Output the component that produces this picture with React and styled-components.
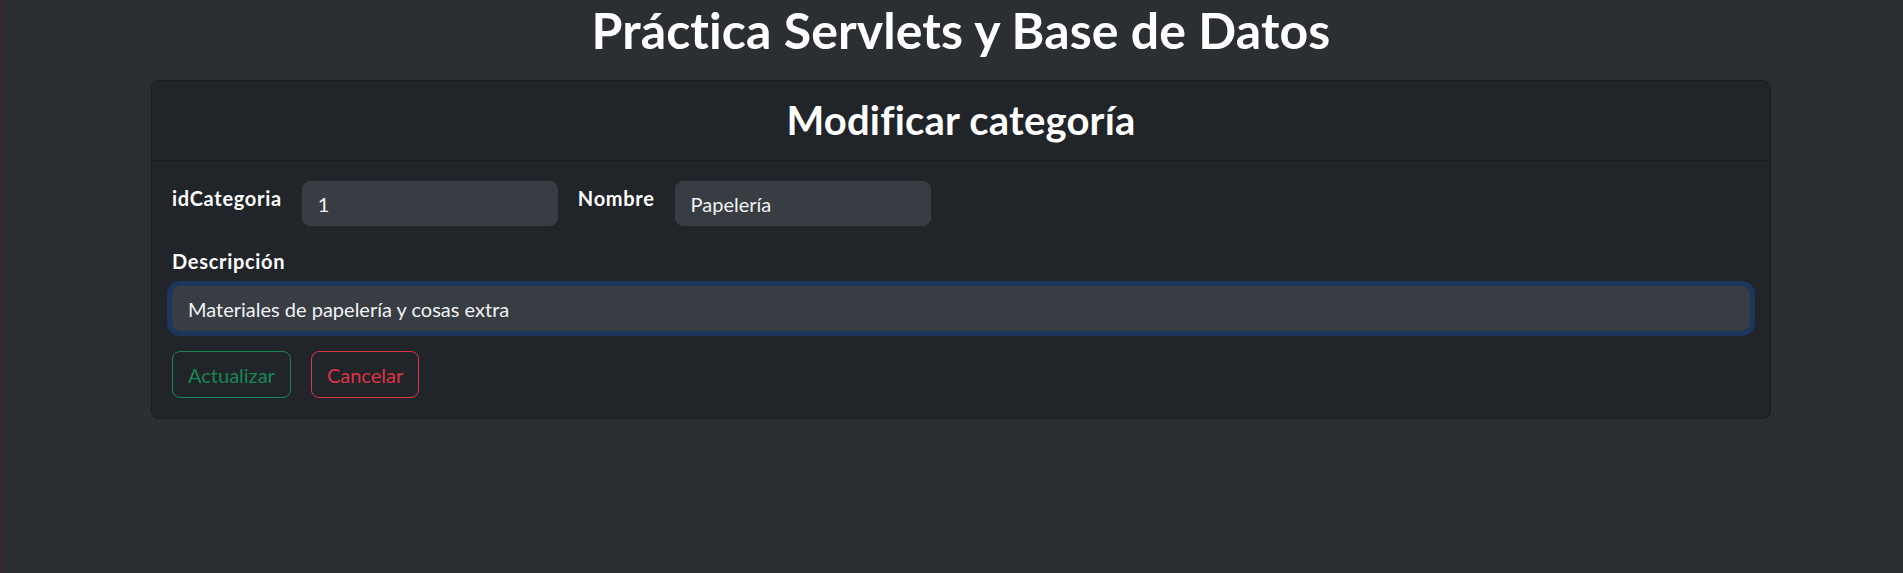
import React, { useEffect, useRef } from 'react';
import styled, { createGlobalStyle } from 'styled-components';

const GlobalStyle = createGlobalStyle`
  html, body {
    margin: 0;
    padding: 0;
    background: #2b2e33;
    min-height: 100%;
  }
  body {
    font-family: Lato, "Liberation Sans", sans-serif;
    color: #f1f3f5;
  }
`

const Page = styled.div`
  min-height: 573px;
  box-sizing: border-box;
  border-left: 1px solid #4f1c1e;
  padding-left: 150px;
`

const Container = styled.div`
  width: 1620px;
`

const Title = styled.h1`
  margin: 0 0 20px;
  text-align: center;
  font-size: 50px;
  line-height: 60px;
  font-weight: 700;
  letter-spacing: 0.1px;
  color: #fff;
`

const Card = styled.div`
  background: #212428;
  border: 1px solid #1a1c20;
  border-radius: 8px;
`

const CardHeader = styled.div`
  padding: 10px 20px 11px;
  border-bottom: 1px solid #1a1c20;
`

const CardTitle = styled.h2`
  margin: 0;
  text-align: center;
  font-size: 40px;
  line-height: 58px;
  font-weight: 700;
  letter-spacing: 0.2px;
  color: #fff;
`

const CardBody = styled.form`
  padding: 20px;
`

const Row = styled.div`
  display: flex;
  align-items: flex-start;
  gap: 20px;
  margin-bottom: ${props => props.mb || 0}px;
`

const Label = styled.label`
  display: block;
  padding-top: ${props => props.pt || 0}px;
  font-size: 20px;
  line-height: 30px;
  font-weight: 700;
  letter-spacing: 0.7px;
  color: #fff;
  margin-bottom: ${props => props.mb || 0}px;
`

const Input = styled.input`
  box-sizing: border-box;
  width: ${props => props.width ? props.width + 'px' : '100%'};
  height: 45px;
  padding: 0 15px;
  border: 1px solid #383c43;
  border-radius: 8px;
  background: #383c43;
  color: #f1f3f5;
  font-family: Lato, "Liberation Sans", sans-serif;
  font-size: 20px;
  outline: none;
  caret-color: #fff;

  &:focus {
    box-shadow: 0 0 0 5px #1c375e;
  }
`

const Field = styled.div`
  margin-bottom: 20px;
`

const Actions = styled.div`
  display: flex;
  gap: 20px;
`

const OutlineButton = styled.button`
  height: 47px;
  padding: 0 15px;
  background: transparent;
  border: 1px solid ${props => props.color};
  border-radius: 8px;
  color: ${props => props.color};
  font-family: Lato, "Liberation Sans", sans-serif;
  font-size: 20px;
  line-height: 30px;
  cursor: pointer;
`

const App = () => {
  const descRef = useRef(null);

  useEffect(() => {
    const el = descRef.current;
    if (el) {
      el.focus();
      el.setSelectionRange(el.value.length, el.value.length);
    }
  }, []);

  return (
    <Page>
      <GlobalStyle />
      <Container>
        <Title>Práctica Servlets y Base de Datos</Title>
        <Card>
          <CardHeader>
            <CardTitle>Modificar categoría</CardTitle>
          </CardHeader>
          <CardBody onSubmit={e => e.preventDefault()}>
            <Row mb={20}>
              <Label htmlFor="idCategoria" pt={2}>idCategoria</Label>
              <Input id="idCategoria" width={256} defaultValue="1" />
              <Label htmlFor="nombre" pt={2}>Nombre</Label>
              <Input id="nombre" width={256} defaultValue="Papelería" />
            </Row>
            <Field>
              <Label htmlFor="descripcion" mb={10}>Descripción</Label>
              <Input id="descripcion" ref={descRef} defaultValue="Materiales de papelería y cosas extra" />
            </Field>
            <Actions>
              <OutlineButton type="submit" color="#198754">Actualizar</OutlineButton>
              <OutlineButton type="button" color="#dc3545">Cancelar</OutlineButton>
            </Actions>
          </CardBody>
        </Card>
      </Container>
    </Page>
  );
}

export default App;
